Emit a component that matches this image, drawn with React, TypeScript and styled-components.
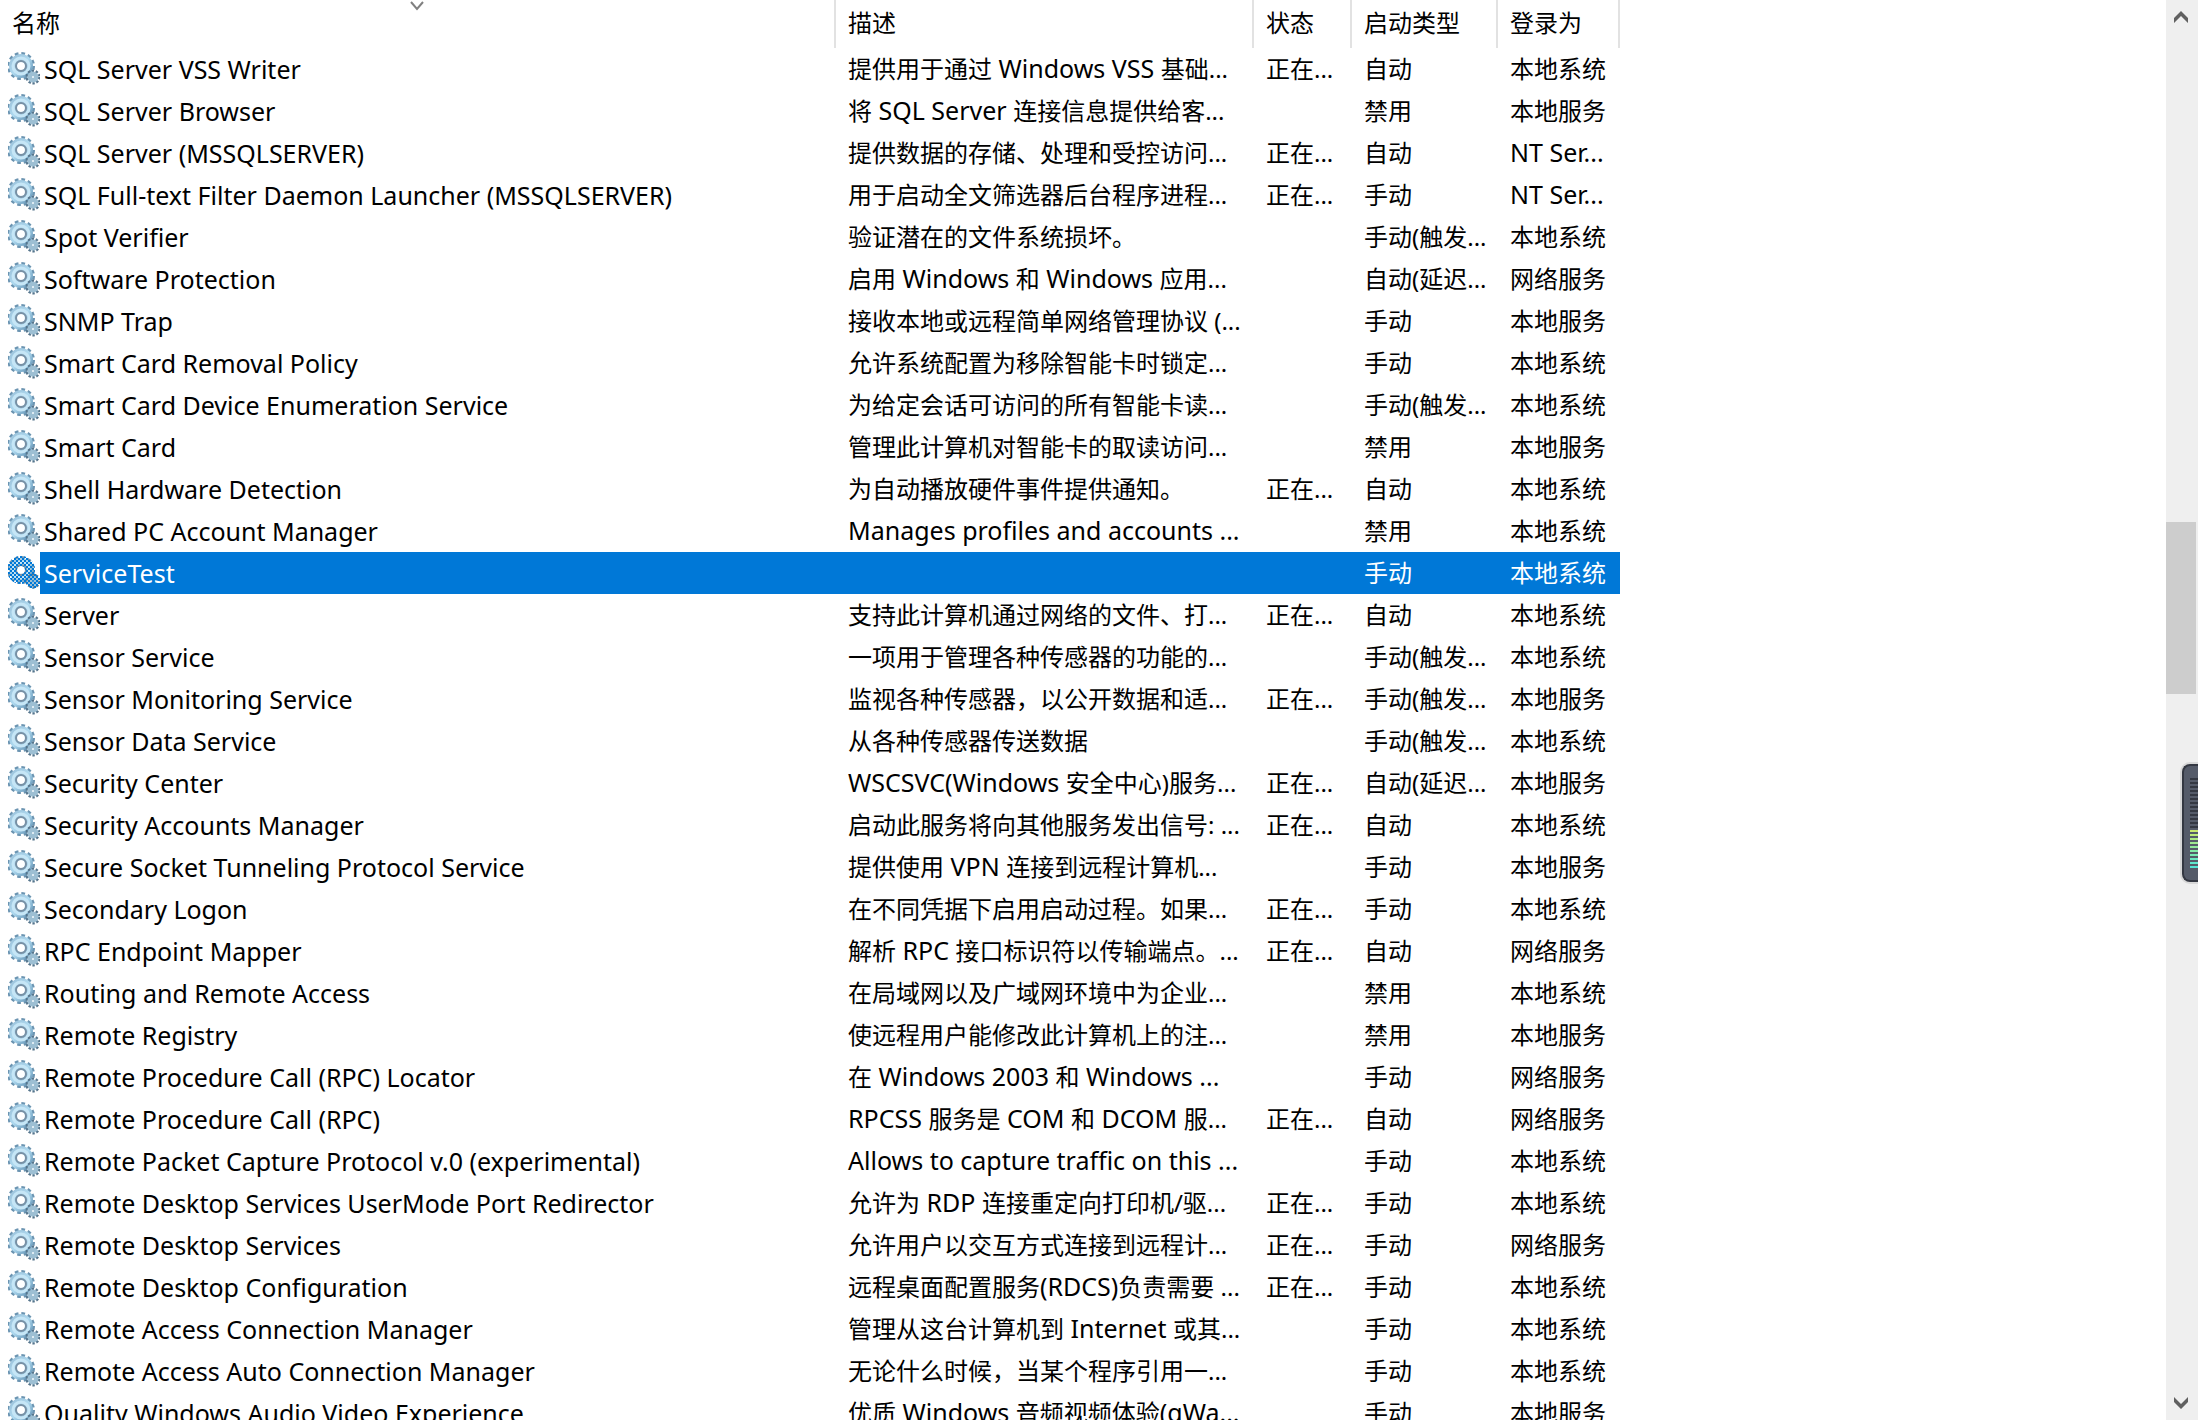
import React from "react";
import styled, { createGlobalStyle, css } from "styled-components";

const GlobalStyle = createGlobalStyle`
  * { box-sizing: border-box; }
  body { margin: 0; background: #fff; overflow: hidden; }
`;

const Window = styled.main`
  position: relative;
  display: flex;
  height: 100vh;
  overflow: hidden;
  color: #000;
  background: #fff;
  font-family: "Noto Sans", "Noto Sans CJK SC", sans-serif;
  font-size: 24px;
  line-height: 42px;
`;

const ListPane = styled.section`
  flex: 1;
  min-width: 0;
  overflow: hidden;
`;

const ServiceTable = styled.table`
  table-layout: fixed;
  width: 1620px;
  border-collapse: separate;
  border-spacing: 0;
`;

const Column = styled.col<{ $width: number }>`
  width: ${(p) => p.$width}px;
`;

const HeaderCell = styled.th`
  position: relative;
  height: 48px;
  padding: 0 0 2px 12px;
  border-right: 2px solid #e2e2e2;
  font-weight: 400;
  text-align: left;
  white-space: nowrap;
`;

const SortArrow = styled.svg`
  position: absolute;
  top: 0;
  left: 0;
  right: 0;
  width: 16px;
  height: 12px;
  margin: 0 auto;
`;

const selectedFill = css`
  background: #0078d7;
  color: #fff;
`;

const Cell = styled.td<{ $selected?: boolean }>`
  height: 42px;
  padding: 0 0 0 12px;
  overflow: hidden;
  white-space: nowrap;
  ${(p) => p.$selected && selectedFill}
`;

const Latin = styled.span`
  font-size: 25px;
  line-height: 1;
`;

const NameCell = styled.td`
  height: 42px;
  padding: 0 0 0 8px;
`;

const NameLine = styled.div`
  display: flex;
  align-items: center;
  height: 42px;
`;

const Name = styled.span<{ $selected?: boolean }>`
  flex: 1;
  padding-left: 4px;
  font-size: 25px;
  white-space: nowrap;
  ${(p) => p.$selected && selectedFill}
`;

const Gears = styled.svg`
  flex: none;
  width: 32px;
  height: 34px;
`;

const Definitions = styled.svg`
  display: block;
  width: 0;
  height: 0;
`;

const Scrollbar = styled.div`
  display: flex;
  flex-direction: column;
  width: 32px;
  background: #efefef;
`;

const ArrowButton = styled.button`
  display: flex;
  align-items: center;
  justify-content: center;
  width: 30px;
  height: 34px;
  padding: 0;
  border: 0;
  background: transparent;
`;

const Track = styled.div`
  display: grid;
  grid-template-rows: 488fr 172fr 692fr;
  flex: 1;
`;

const Thumb = styled.div`
  grid-row: 2;
  width: 30px;
  background: #cdcdcd;
`;

const Meter = styled.aside`
  position: absolute;
  top: 764px;
  right: 0;
  width: 16px;
  height: 118px;
  padding: 12px 0 0 6px;
  border: 2px solid #343842;
  border-right: 0;
  border-radius: 8px 0 0 8px;
  background: #555b69;
  box-shadow: 0 0 0 2px #d8d8d8;
`;

const MeterBar = styled.div<{ $color: string }>`
  height: 2px;
  margin-bottom: 2px;
  background: ${(p) => p.$color};
`;

const meterColors = [
  ...Array(13).fill("#343842"),
  "#c9e76f", "#bdea7a", "#aeea84", "#a0ea90", "#92ea9c",
  "#84eaa8", "#78e9b4", "#6ce8c0", "#60e8cc", "#56e6d4",
];

type Service = [name: string, description: string, running: boolean, startup: string, account: string];

const AUTO = "自动";
const MANUAL = "手动";
const DISABLED = "禁用";
const TRIGGER = "手动(触发...";
const DELAYED = "自动(延迟...";
const SYSTEM = "本地系统";
const LOCAL = "本地服务";
const NETWORK = "网络服务";

const services: Service[] = [
  ["SQL Server VSS Writer", "提供用于通过 Windows VSS 基础...", true, AUTO, SYSTEM],
  ["SQL Server Browser", "将 SQL Server 连接信息提供给客...", false, DISABLED, LOCAL],
  ["SQL Server (MSSQLSERVER)", "提供数据的存储、处理和受控访问...", true, AUTO, "NT Ser..."],
  ["SQL Full-text Filter Daemon Launcher (MSSQLSERVER)", "用于启动全文筛选器后台程序进程...", true, MANUAL, "NT Ser..."],
  ["Spot Verifier", "验证潜在的文件系统损坏。", false, TRIGGER, SYSTEM],
  ["Software Protection", "启用 Windows 和 Windows 应用...", false, DELAYED, NETWORK],
  ["SNMP Trap", "接收本地或远程简单网络管理协议 (...", false, MANUAL, LOCAL],
  ["Smart Card Removal Policy", "允许系统配置为移除智能卡时锁定...", false, MANUAL, SYSTEM],
  ["Smart Card Device Enumeration Service", "为给定会话可访问的所有智能卡读...", false, TRIGGER, SYSTEM],
  ["Smart Card", "管理此计算机对智能卡的取读访问...", false, DISABLED, LOCAL],
  ["Shell Hardware Detection", "为自动播放硬件事件提供通知。", true, AUTO, SYSTEM],
  ["Shared PC Account Manager", "Manages profiles and accounts ...", false, DISABLED, SYSTEM],
  ["ServiceTest", "", false, MANUAL, SYSTEM],
  ["Server", "支持此计算机通过网络的文件、打...", true, AUTO, SYSTEM],
  ["Sensor Service", "一项用于管理各种传感器的功能的...", false, TRIGGER, SYSTEM],
  ["Sensor Monitoring Service", "监视各种传感器，以公开数据和适...", true, TRIGGER, LOCAL],
  ["Sensor Data Service", "从各种传感器传送数据", false, TRIGGER, SYSTEM],
  ["Security Center", "WSCSVC(Windows 安全中心)服务...", true, DELAYED, LOCAL],
  ["Security Accounts Manager", "启动此服务将向其他服务发出信号: ...", true, AUTO, SYSTEM],
  ["Secure Socket Tunneling Protocol Service", "提供使用 VPN 连接到远程计算机...", false, MANUAL, LOCAL],
  ["Secondary Logon", "在不同凭据下启用启动过程。如果...", true, MANUAL, SYSTEM],
  ["RPC Endpoint Mapper", "解析 RPC 接口标识符以传输端点。...", true, AUTO, NETWORK],
  ["Routing and Remote Access", "在局域网以及广域网环境中为企业...", false, DISABLED, SYSTEM],
  ["Remote Registry", "使远程用户能修改此计算机上的注...", false, DISABLED, LOCAL],
  ["Remote Procedure Call (RPC) Locator", "在 Windows 2003 和 Windows ...", false, MANUAL, NETWORK],
  ["Remote Procedure Call (RPC)", "RPCSS 服务是 COM 和 DCOM 服...", true, AUTO, NETWORK],
  ["Remote Packet Capture Protocol v.0 (experimental)", "Allows to capture traffic on this ...", false, MANUAL, SYSTEM],
  ["Remote Desktop Services UserMode Port Redirector", "允许为 RDP 连接重定向打印机/驱...", true, MANUAL, SYSTEM],
  ["Remote Desktop Services", "允许用户以交互方式连接到远程计...", true, MANUAL, NETWORK],
  ["Remote Desktop Configuration", "远程桌面配置服务(RDCS)负责需要 ...", true, MANUAL, SYSTEM],
  ["Remote Access Connection Manager", "管理从这台计算机到 Internet 或其...", false, MANUAL, SYSTEM],
  ["Remote Access Auto Connection Manager", "无论什么时候，当某个程序引用一...", false, MANUAL, SYSTEM],
  ["Quality Windows Audio Video Experience", "优质 Windows 音频视频体验(qWa...", false, MANUAL, LOCAL],
];

const columns = [
  { title: "名称", width: 836 },
  { title: "描述", width: 418 },
  { title: "状态", width: 98 },
  { title: "启动类型", width: 146 },
  { title: "登录为", width: 122 },
];

const SELECTED = "ServiceTest";

// Latin words run one pixel larger than the Chinese text around them.
function MixedText({ text }: { text: string }) {
  return (
    <>
      {text.split(/([ -~]*[A-Za-z][ -~]*)/).map((part, i) =>
        i % 2 ? <Latin key={i}>{part}</Latin> : part
      )}
    </>
  );
}

function GearDefs() {
  return (
    <Definitions aria-hidden="true">
      <defs>
        <linearGradient id="steel" x1="0" y1="0" x2="1" y2="1">
          <stop offset="0" stopColor="#9fc6de" />
          <stop offset="0.5" stopColor="#aed9ef" />
          <stop offset="1" stopColor="#6f9fbf" />
        </linearGradient>
        <pattern id="checker" width="4" height="4" patternUnits="userSpaceOnUse">
          <path d="M0 0h2v2H0zM2 2h2v2H2z" fill="#0078d7" />
        </pattern>
      </defs>
    </Definitions>
  );
}

function GearIcon({ selected }: { selected: boolean }) {
  return (
    <Gears viewBox="0 0 32 34" fill="none" aria-hidden="true">
      <circle cx="13" cy="14" r="12" stroke="#6b94b1" strokeWidth="4" strokeDasharray="3.5 2.78" />
      <circle cx="13" cy="14" r="8" stroke="url(#steel)" strokeWidth="8" />
      <circle cx="13" cy="14" r="8" stroke="#c6e6f6" strokeWidth="3" />
      <circle cx="13" cy="14" r="5" stroke="#7890a4" strokeWidth="2" />
      <circle cx="25" cy="25" r="6" stroke="#56758c" strokeWidth="3" strokeDasharray="2.2 1.57" />
      <circle cx="25" cy="25" r="3" stroke="#9dbfd3" strokeWidth="5" />
      <circle cx="25" cy="25" r="1" fill="#eef7fb" />
      {selected && (
        <g stroke="url(#checker)">
          <circle cx="13" cy="14" r="9" strokeWidth="10" />
          <circle cx="25" cy="25" r="4" strokeWidth="7" />
        </g>
      )}
    </Gears>
  );
}

function Chevron({ down = false }: { down?: boolean }) {
  return (
    <svg width="14" height="12" viewBox="0 0 14 12" aria-hidden="true">
      <path d={down ? "M0 0L7 7L14 0V5L7 12L0 5Z" : "M0 12L7 5L14 12V7L7 0L0 7Z"} fill="#606060" />
    </svg>
  );
}

export default function App() {
  return (
    <Window lang="zh-CN">
      <GlobalStyle />
      <ListPane>
        <GearDefs />
        <ServiceTable>
          <colgroup>
            {columns.map((c) => (
              <Column key={c.title} $width={c.width} />
            ))}
          </colgroup>
          <thead>
            <tr>
              {columns.map((c, i) => (
                <HeaderCell key={c.title} scope="col">
                  {c.title}
                  {i === 0 && (
                    <SortArrow viewBox="0 0 16 12" aria-hidden="true">
                      <path d="M2 2L8 9L14 2" fill="none" stroke="#808080" strokeWidth="2" />
                    </SortArrow>
                  )}
                </HeaderCell>
              ))}
            </tr>
          </thead>
          <tbody>
            {services.map(([name, description, running, startup, account]) => {
              const selected = name === SELECTED;
              return (
                <tr key={name} aria-selected={selected}>
                  <NameCell>
                    <NameLine>
                      <GearIcon selected={selected} />
                      <Name $selected={selected}>{name}</Name>
                    </NameLine>
                  </NameCell>
                  <Cell $selected={selected}>
                    <MixedText text={description} />
                  </Cell>
                  <Cell $selected={selected}>{running ? "正在..." : ""}</Cell>
                  <Cell $selected={selected}>{startup}</Cell>
                  <Cell $selected={selected}>
                    <MixedText text={account} />
                  </Cell>
                </tr>
              );
            })}
          </tbody>
        </ServiceTable>
      </ListPane>
      <Scrollbar>
        <ArrowButton type="button" aria-label="向上滚动">
          <Chevron />
        </ArrowButton>
        <Track>
          <Thumb />
        </Track>
        <ArrowButton type="button" aria-label="向下滚动">
          <Chevron down />
        </ArrowButton>
      </Scrollbar>
      <Meter aria-hidden="true">
        {meterColors.map((color, i) => (
          <MeterBar key={i} $color={color} />
        ))}
      </Meter>
    </Window>
  );
}
